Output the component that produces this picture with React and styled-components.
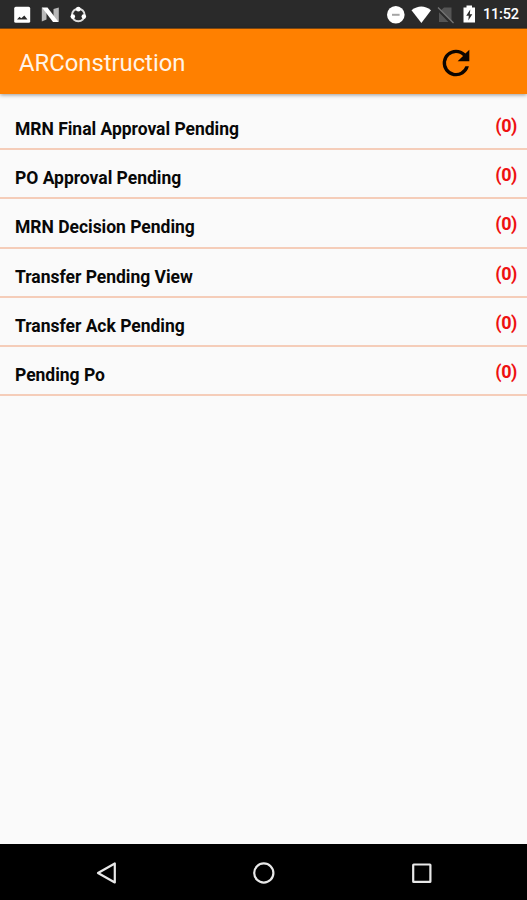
import React from 'react';
import styled, { createGlobalStyle } from 'styled-components';

const GlobalStyle = createGlobalStyle`
	* {
		box-sizing: border-box;
	}

	body {
		margin: 0;
		background: #fafafa;
		font-family: Roboto, 'Liberation Sans', sans-serif;
	}
`;

const Screen = styled.div`
	display: flex;
	flex-direction: column;
	width: 100%;
	height: 100vh;
	overflow: hidden;
	background: #fafafa;
`;

const StatusBar = styled.div`
	display: flex;
	flex: none;
	align-items: center;
	justify-content: space-between;
	height: 28px;
	padding: 2px 8px 0 13px;
	background: #2a2a2a;
`;

const StatusGroup = styled.div`
	display: flex;
	align-items: center;
	gap: ${(props) => props.$gap};
`;

const Icon = styled.svg`
	display: block;
	flex: none;
`;

const Clock = styled.span`
	color: #fff;
	font-size: 14.5px;
	font-weight: 500;
	line-height: 20px;
	letter-spacing: -0.2px;
	width: 36px;
	white-space: nowrap;
`;

const AppBar = styled.header`
	display: flex;
	flex: none;
	align-items: center;
	justify-content: space-between;
	height: 66px;
	padding: 3px 51px 0 19px;
	background: #ff8000;
	border-top: 1px solid #7a4510;
	box-shadow: 0 1px 4px rgba(0, 0, 0, 0.4);
	z-index: 1;
`;

const Title = styled.h1`
	margin: 0;
	color: #fff4e8;
	font-size: 23.8px;
	font-weight: 400;
	line-height: 32px;
`;

const RefreshButton = styled.button`
	padding: 0;
	border: 0;
	background: none;
`;

const List = styled.ul`
	flex: 1;
	margin: 0;
	padding: 7px 0 0;
	list-style: none;
`;

const Row = styled.li`
	display: flex;
	justify-content: space-between;
	height: 49.2px;
	padding: 0 10px 0 15px;
	border-bottom: 2px solid #f5cdb9;
`;

const Label = styled.span`
	padding-top: 17px;
	color: #080808;
	font-size: 17.5px;
	font-weight: 700;
	line-height: 22px;
	letter-spacing: -0.02px;
`;

const Count = styled.span`
	padding-top: 14px;
	color: #ee1111;
	font-size: 18px;
	font-weight: 700;
	line-height: 22px;
	letter-spacing: -0.4px;
`;

const NavBar = styled.nav`
	display: flex;
	flex: none;
	align-items: center;
	justify-content: space-between;
	height: 56px;
	padding: 2px 93px 0 94px;
	background: #000;
`;

const items = [
	{ label: 'MRN Final Approval Pending', count: 0 },
	{ label: 'PO Approval Pending', count: 0 },
	{ label: 'MRN Decision Pending', count: 0 },
	{ label: 'Transfer Pending View', count: 0 },
	{ label: 'Transfer Ack Pending', count: 0 },
	{ label: 'Pending Po', count: 0 },
];

function Notifications() {
	return (
		<StatusGroup $gap='10px'>
			<Icon width='18' height='18' viewBox='0 0 18 18'>
				<rect x='1.2' y='0.8' width='16' height='16' rx='1.6' fill='#fff' />
				<path d='M4 13.5L6.5 10.8L8.3 12.2L11.3 9.5L14.5 13.5Z' fill='#2a2a2a' />
			</Icon>
			<Icon width='18' height='18' viewBox='0 0 18 18'>
				<path d='M0.8 1.5L5.5 3V13.5L0.8 15.5ZM12.5 3L17.8 1.5V16L12.5 14Z' fill='#b8b8b8' />
				<path d='M1 1.5H6.5L17.5 16H12Z' fill='#fff' />
			</Icon>
			<Icon width='18' height='18' viewBox='0 0 18 18'>
				<circle
					cx='9.3'
					cy='9'
					r='6.3'
					fill='none'
					stroke='#ddd'
					strokeWidth='1.9'
				/>
				<circle cx='9.3' cy='3.2' r='2.4' fill='#fff' />
				<circle cx='3.8' cy='10.6' r='2.3' fill='#fff' />
				<circle cx='14.8' cy='10.6' r='2.3' fill='#fff' />
			</Icon>
		</StatusGroup>
	);
}

function SystemIcons() {
	return (
		<StatusGroup $gap='6px'>
			<Icon width='20' height='20' viewBox='0 0 20 20'>
				<circle cx='10.8' cy='9.8' r='8.8' fill='#fff' />
				<path d='M7 9.8H14.6' stroke='#a5a5a5' strokeWidth='2' />
			</Icon>
			<Icon width='20' height='20' viewBox='0 0 20 20'>
				<path d='M0.5 5.3Q10.4 -2.2 20 5.3L10.4 18Z' fill='#fff' />
			</Icon>
			<Icon width='17' height='20' viewBox='0 0 17 20'>
				<path d='M7 2.5H14.5V17H2V7Z' fill='#555' />
				<path d='M0 3L15.5 19' stroke='#2a2a2a' strokeWidth='3' />
				<path d='M1 2.5L16.5 18' stroke='#777' strokeWidth='1.2' />
			</Icon>
			<Icon width='17' height='20' viewBox='0 0 17 20'>
				<path d='M6.5 0.5H12V2.5H15V17.5H3.5V2.5H6.5Z' fill='#fff' />
				<path d='M10.3 4.5L6.2 10.8H8.8L8.3 15.5L12.3 9.3H9.8Z' fill='#2a2a2a' />
			</Icon>
			<Clock>11:52</Clock>
		</StatusGroup>
	);
}

export default function App() {
	return (
		<Screen>
			<GlobalStyle />
			<StatusBar>
				<Notifications />
				<SystemIcons />
			</StatusBar>

			<AppBar>
				<Title>ARConstruction</Title>
				<RefreshButton aria-label='Refresh'>
					<Icon width='40' height='40' viewBox='0 0 24 24'>
						<path
							d='M17.65 6.35A7.96 7.96 0 0 0 12 4a8 8 0 1 0 7.73 10h-2.08A6 6 0 1 1 12 6c1.66 0 3.14.69 4.22 1.78L13 11h7V4z'
							fill='#0c0500'
						/>
					</Icon>
				</RefreshButton>
			</AppBar>

			<List>
				{items.map((item) => (
					<Row key={item.label}>
						<Label>{item.label}</Label>
						<Count>({item.count})</Count>
					</Row>
				))}
			</List>

			<NavBar>
				<Icon width='24' height='24' viewBox='0 0 24 24'>
					<path
						d='M20.8 2.5V21.5L4 12Z'
						fill='none'
						stroke='#e8e8e8'
						strokeWidth='2.2'
						strokeLinejoin='round'
					/>
				</Icon>
				<Icon width='24' height='24' viewBox='0 0 24 24'>
					<circle
						cx='11.8'
						cy='12'
						r='9.6'
						fill='none'
						stroke='#e8e8e8'
						strokeWidth='2.2'
					/>
				</Icon>
				<Icon width='24' height='24' viewBox='0 0 24 24'>
					<rect
						x='3.2'
						y='3.5'
						width='17.2'
						height='17.4'
						rx='0.5'
						fill='none'
						stroke='#e8e8e8'
						strokeWidth='2.2'
					/>
				</Icon>
			</NavBar>
		</Screen>
	);
}
